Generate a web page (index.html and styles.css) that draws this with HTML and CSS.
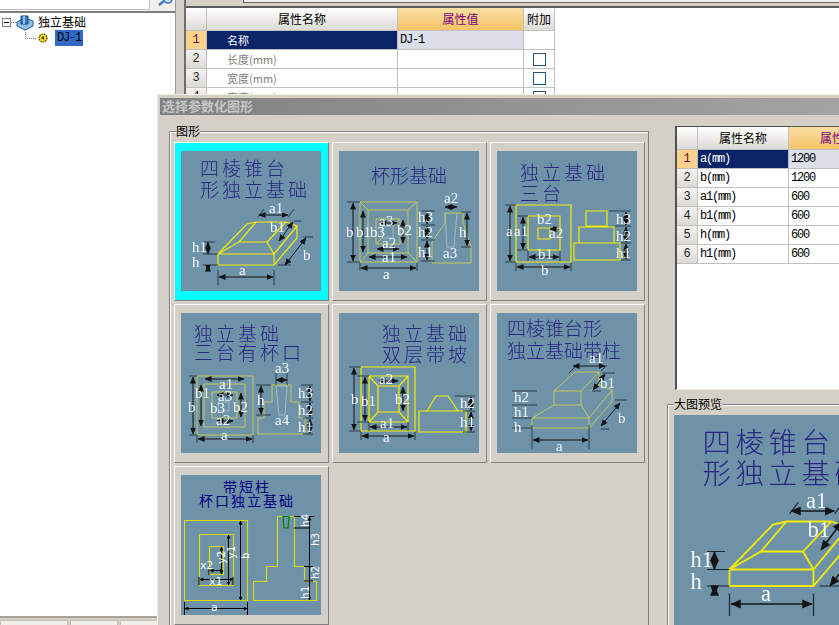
FILE: index.html
```html
<!DOCTYPE html>
<html lang="zh">
<head>
<meta charset="utf-8">
<title>选择参数化图形</title>
<link rel="stylesheet" href="styles.css">
</head>
<body>
<svg class="defs" aria-hidden="true">
  <defs>
    <marker id="ar" markerUnits="userSpaceOnUse" markerWidth="7" markerHeight="7" refX="6.500" refY="3.500" orient="auto-start-reverse"><path d="M0 .5L7 3.500L0 6.500z" fill="#141414"/></marker>
  </defs>
</svg>

<div class="page">
  <aside class="left">
    <div class="search">
      <div class="search-field"><span class="search-text">搜索构件...</span></div>
      <svg class="search-icon" width="16" height="6" viewBox="0 0 16 6"><path d="M2 5L7 1" stroke="#3d78c8" stroke-width="2.4" fill="none"/><circle cx="11" cy="-1" r="4" fill="#cfe2f6" stroke="#3d78c8" stroke-width="1.6"/></svg>
    </div>
    <div class="tree">
      <div class="tree-row">
        <svg class="tree-lead" width="36" height="17" viewBox="0 0 36 17">
          <rect x="2.5" y="4.5" width="8" height="8" fill="#fff" stroke="#808080"/>
          <path d="M4 8.5H9" stroke="#000"/>
          <path d="M11 8.5H17" stroke="#808080" stroke-dasharray="1 1"/>
          <path d="M17 8L25 4L33 7V12L25 16L17 12z" fill="#8ec0e8" stroke="#1c5c9c"/>
          <path d="M21 2H28V10H21z" fill="#3f7fc0" stroke="#123f78"/>
          <path d="M24 2V10" stroke="#bcdcf5" stroke-width="1.4"/>
        </svg>
        <span class="tree-label">独立基础</span>
      </div>
      <div class="tree-row tree-row-child">
        <svg class="tree-lead2" width="53" height="16" viewBox="0 0 53 16">
          <path d="M25.5 0V8.5H37" stroke="#808080" stroke-dasharray="1 1" fill="none"/>
          <circle cx="43" cy="8" r="4" fill="#f7e000" stroke="#403800" stroke-width="1.2" stroke-dasharray="1.6 .8"/>
          <circle cx="43" cy="8" r="1.4" fill="#403800"/>
        </svg>
        <span class="tree-selected">DJ-1</span>
      </div>
    </div>
    <div class="tabs">
      <span class="tab tab-a"></span><span class="tab tab-b"></span><span class="tab tab-c"></span>
    </div>
  </aside>

  <main class="right">
    <div class="strip"><span class="strip-field"></span></div>
    <table class="grid main-grid">
      <colgroup><col class="c-num"><col class="c-name"><col class="c-val"><col class="c-add"></colgroup>
      <tr class="head"><th></th><th>属性名称</th><th class="hot">属性值</th><th>附加</th></tr>
      <tr><td class="num on">1</td><td class="name sel">名称</td><td class="val cur">DJ-1</td><td></td></tr>
      <tr><td class="num">2</td><td class="name dim-text">长度(mm)</td><td></td><td class="chk"><span class="box"></span></td></tr>
      <tr><td class="num">3</td><td class="name dim-text">宽度(mm)</td><td></td><td class="chk"><span class="box"></span></td></tr>
      <tr><td class="num">4</td><td class="name dim-text">高度(mm)</td><td></td><td class="chk"><span class="box"></span></td></tr>
    </table>
  </main>
</div>

<section class="dialog">
  <h1 class="dialog-title">选择参数化图形</h1>
  <div class="dialog-body">
    <fieldset class="shapes">
      <legend>图形</legend>
      <div class="tiles">

        <div class="tile tile-on">
          <svg class="pic soft" viewBox="0 0 140 140">
            <text class="tt" x="19" y="25" letter-spacing="3">四棱锥台</text>
            <text class="tt" x="19" y="46" letter-spacing="3">形独立基础</text>
            <g class="y"><path d="M37 103H93V114H37zM37 103L66 73L75 71H105L116 75V87L93 114M93 103L116 75M37 103L58 91H86L93 103M58 91L75 71M86 91L105 71"/></g>
            <g class="tick"><path d="M37 119V134M93 119V134M22 91H34M22 103H37M22 114H37M113 70H120M110 114H97M122 86H132M77 66L83 58M107 66L113 58"/></g>
            <g class="dimg" marker-start="url(#ar)" marker-end="url(#ar)"><path d="M38 126H92"/><path d="M78 64H107"/><path d="M27 91V103"/><path d="M27 114V120"/><path d="M98 90L112 71"/><path d="M104 114L125 87"/></g>
            <g class="lb"><text x="88" y="62">a1</text><text x="89" y="81">b1</text><text x="122" y="109">b</text><text x="11" y="101">h1</text><text x="11" y="116">h</text><text x="58" y="124">a</text></g>
          </svg>
        </div>

        <div class="tile">
          <svg class="pic soft" viewBox="0 0 140 140">
            <text class="tt" x="32" y="32" font-size="18">杯形基础</text>
            <g class="p"><path d="M21 51H78V111H21zM29 59H69V102H29zM37 68H61V93H37zM21 51L29 59M78 51L69 59M21 111L29 102M78 111L69 102M37 93L43 87M61 68L54 75"/></g>
            <g class="w"><path d="M43 75H54V87H43zM106 62L108 96H115L118 62"/></g>
            <g class="p"><path d="M106 62H124V72L132 95V112H93V91L106 72z"/></g>
            <g class="tick"><path d="M82 60H96M82 74H96M82 89H96M82 110H96M122 61H132M122 96H132M21 112V120M78 112V120M8 51H21M8 111H21"/></g>
            <g class="dimg" marker-start="url(#ar)" marker-end="url(#ar)"><path d="M14 52V110"/><path d="M24 60V101"/><path d="M22 117H77"/><path d="M30 106H68"/><path d="M38 98H60"/><path d="M41 72H58"/><path d="M64 69V92"/><path d="M106 56H118"/><path d="M88 61V73"/><path d="M88 75V88"/><path d="M88 90V109"/><path d="M128 62V95"/></g>
            <g class="lb"><text x="7" y="86">b</text><text x="17" y="86">b1</text><text x="31" y="86">b3</text><text x="40" y="75">a3</text><text x="58" y="84">b2</text><text x="43" y="97">a2</text><text x="43" y="111">a1</text><text x="44" y="128">a</text><text x="105" y="52">a2</text><text x="79" y="71">h3</text><text x="79" y="86">h2</text><text x="79" y="106">h1</text><text x="120" y="86">h</text><text x="104" y="107">a3</text></g>
          </svg>
        </div>

        <div class="tile">
          <svg class="pic soft" viewBox="0 0 140 140">
            <text class="tt" x="23" y="29" letter-spacing="3">独立基础</text>
            <text class="tt" x="23" y="50" letter-spacing="3">三台</text>
            <g class="y"><path d="M19 54H74V111H19zM31 65H63V99H31zM41 77H53V88H41zM89 60H110V75H89zM82 76H117V92H82zM77 92H123V109H77z"/></g>
            <g class="tick"><path d="M112 60H134M118 75H134M124 92H134M124 109H134M8 54H19M8 111H19M20 65H31M20 99H31M19 112V120M74 112V120M31 100V110M63 100V110"/></g>
            <g class="dimg" marker-start="url(#ar)" marker-end="url(#ar)"><path d="M13 55V110"/><path d="M26 66V98"/><path d="M20 116H73"/><path d="M32 106H62"/><path d="M129 61V74"/><path d="M129 76V91"/><path d="M129 93V108"/><path d="M53 78H62"/></g>
            <g class="lb"><text x="9" y="85">a</text><text x="17" y="85">a1</text><text x="40" y="73">b2</text><text x="52" y="87">a2</text><text x="41" y="108">b1</text><text x="44" y="124">b</text><text x="119" y="73">h3</text><text x="119" y="90">h2</text><text x="119" y="107">h1</text></g>
          </svg>
        </div>

        <div class="tile">
          <svg class="pic soft" viewBox="0 0 140 140">
            <text class="tt" x="13" y="28" letter-spacing="3">独立基础</text>
            <text class="tt" x="13" y="47" letter-spacing="3">三台有杯口</text>
            <g class="p"><path d="M16 63H72V122H16zM23 71H64V114H23zM31 79H56V105H31zM91 72H110V89H118V105H124V121H77V105H83V89H91z"/></g>
            <g class="w"><path d="M37 89H48V98H37zM95 73H106L104 102H98z"/></g>
            <g class="tick"><path d="M8 63H16M8 122H16M16 122V130M72 122V130M75 72H90M75 102H90M120 72H132M120 89H132M122 105H132M122 121H132M95 60V72M106 60V72"/></g>
            <g class="dimg" marker-start="url(#ar)" marker-end="url(#ar)"><path d="M12 64V121"/><path d="M20 72V113"/><path d="M17 126H71"/><path d="M24 66H63"/><path d="M60 80V104"/><path d="M95 67H106"/><path d="M80 73V101"/><path d="M36 82H52"/><path d="M36 108H52"/><path d="M129 73V88"/><path d="M129 90V104"/><path d="M129 106V120"/></g>
            <g class="lb"><text x="7" y="99">b</text><text x="14" y="85">b1</text><text x="38" y="76">a1</text><text x="37" y="88">a3</text><text x="29" y="100">b3</text><text x="52" y="99">b2</text><text x="35" y="112">a2</text><text x="40" y="127">a</text><text x="94" y="60">a3</text><text x="76" y="92">h</text><text x="117" y="85">h3</text><text x="117" y="102">h2</text><text x="117" y="119">h1</text><text x="94" y="112">a4</text></g>
          </svg>
        </div>

        <div class="tile">
          <svg class="pic soft" viewBox="0 0 140 140">
            <text class="tt" x="43" y="28" letter-spacing="3">独立基础</text>
            <text class="tt" x="43" y="49" letter-spacing="3">双层带坡</text>
            <g class="y"><path d="M22 54H76V118H22zM30 63H69V109H30zM39 73H60V99H39zM30 63L39 73M69 63L60 73M30 109L39 99M69 109L60 99M80 98H127V119H80zM88 98L97 83H109L119 98"/></g>
            <g class="tick"><path d="M10 54H22M10 118H22M18 63H30M18 109H30M22 119V127M76 119V127M116 83H136M124 98H136M124 119H136M30 109V118M69 109V118"/></g>
            <g class="dimg" marker-start="url(#ar)" marker-end="url(#ar)"><path d="M15 55V117"/><path d="M26 64V108"/><path d="M23 123H75"/><path d="M31 114H68"/><path d="M40 68H59"/><path d="M64 74V98"/><path d="M132 84V97"/><path d="M132 99V118"/></g>
            <g class="lb"><text x="12" y="91">b</text><text x="22" y="93">b1</text><text x="40" y="71">a2</text><text x="56" y="91">b2</text><text x="41" y="115">a1</text><text x="44" y="129">a</text><text x="121" y="95">h2</text><text x="121" y="114">h1</text></g>
          </svg>
        </div>

        <div class="tile">
          <svg class="pic soft" viewBox="0 0 140 140">
            <text class="tt" x="10" y="23" font-size="18">四棱锥台形</text>
            <text class="tt" x="10" y="45" font-size="18">独立基础带柱</text>
            <g class="p"><path d="M35 105H92V115H35zM57 78H84V92H57zM57 78L78 59H102L84 78M102 59V72L93 78M35 105L57 92M92 105L84 92M92 115L115 89V77L102 72M92 105L115 77"/></g>
            <g class="tick"><path d="M35 112V136M92 112V136M15 78H40M15 92H40M15 105H35M15 115H35M78 54L72 60M110 52L104 58M104 78H95M105 60H118M104 116H112M118 87H130"/></g>
            <g class="dimg" marker-start="url(#ar)" marker-end="url(#ar)"><path d="M36 127H91"/><path d="M76 53H108"/><path d="M96 77L108 61"/><path d="M104 113L123 90"/></g>
            <g class="lb"><text x="17" y="89">h2</text><text x="17" y="104">h1</text><text x="17" y="119">h</text><text x="92" y="50">a1</text><text x="103" y="75">b1</text><text x="121" y="110">b</text><text x="59" y="138">a</text></g>
          </svg>
        </div>

        <div class="tile">
          <svg class="pic" viewBox="0 0 140 140">
            <text class="tt crisp" x="42" y="17" letter-spacing="2">带短柱</text>
            <text class="tt crisp" x="18" y="31" letter-spacing="2">杯口独立基础</text>
            <g class="y2"><path d="M3.500 45.500H66.500V125.500H3.500zM18.500 59.500H52.500V110.500H18.500zM28.500 71.500H42.500V99.500H28.500zM96.500 41.500H113.500V91.500H123.500V106.500H135.500V125.500H72.500V106.500H85.500V91.500H96.500z"/></g>
            <path d="M102 41.500H108L107 53H103z" fill="none" stroke="#008000" stroke-width="1.200"/>
            <g class="tick2"><path d="M3.500 127V141M66.500 127V141M113 41.500H133M113 53H128M123 91.500H132M123 106H132M18 102V110M52 102V110M28 92V100"/></g>
            <g class="dimg2" marker-start="url(#ar2)" marker-end="url(#ar2)"><path d="M4 133.500H66"/><path d="M59.500 46V125"/><path d="M47.500 60V110"/><path d="M40.500 72V99"/><path d="M19 104.500H52"/><path d="M29 95.500H42"/><path d="M128.500 42V125"/></g>
            <g class="lb2"><text x="19" y="94">x2</text><text x="28" y="110">x1</text><text x="30" y="136">a</text>
              <text transform="translate(44 89) rotate(-90)">y2</text><text transform="translate(54 84) rotate(-90)">y1</text><text transform="translate(68 84) rotate(-90)">b</text>
              <text transform="translate(128 52) rotate(-90)">h4</text><text transform="translate(138 71) rotate(-90)">h3</text><text transform="translate(138 104) rotate(-90)">h2</text><text transform="translate(128 124) rotate(-90)">h1</text></g>
          </svg>
        </div>

      </div>
    </fieldset>

    <div class="side">
      <div class="params">
        <table class="grid side-grid">
          <colgroup><col class="s-num"><col class="s-name"><col class="s-val"><col class="s-add"></colgroup>
          <tr class="head"><th></th><th>属性名称</th><th class="hot">属性值</th><th>附加</th></tr>
          <tr><td class="num on">1</td><td class="mono sel">a(mm)</td><td class="mono cur">1200</td><td></td></tr>
          <tr><td class="num">2</td><td class="mono">b(mm)</td><td class="mono">1200</td><td></td></tr>
          <tr><td class="num">3</td><td class="mono">a1(mm)</td><td class="mono">600</td><td></td></tr>
          <tr><td class="num">4</td><td class="mono">b1(mm)</td><td class="mono">600</td><td></td></tr>
          <tr><td class="num">5</td><td class="mono">h(mm)</td><td class="mono">600</td><td></td></tr>
          <tr><td class="num">6</td><td class="mono">h1(mm)</td><td class="mono">600</td><td></td></tr>
        </table>
      </div>
      <fieldset class="preview">
        <legend>大图预览</legend>
        <svg class="pic-big soft" viewBox="0 0 140 140">
          <text class="tt" x="19" y="25" letter-spacing="3">四棱锥台</text>
          <text class="tt" x="19" y="46" letter-spacing="3">形独立基础</text>
          <g class="y"><path d="M37 103H93V114H37zM37 103L66 73L75 71H105L116 75V87L93 114M93 103L116 75M37 103L58 91H86L93 103M58 91L75 71M86 91L105 71"/></g>
          <g class="tick"><path d="M37 119V134M93 119V134M22 91H34M22 103H37M22 114H37M113 70H120M110 114H97M122 86H132M77 66L83 58M107 66L113 58"/></g>
          <g class="dimg" marker-start="url(#ar)" marker-end="url(#ar)"><path d="M38 126H92"/><path d="M78 64H107"/><path d="M27 91V103"/><path d="M27 114V120"/><path d="M98 90L112 71"/><path d="M104 114L125 87"/></g>
          <g class="lb"><text x="88" y="62">a1</text><text x="89" y="81">b1</text><text x="122" y="109">b</text><text x="11" y="101">h1</text><text x="11" y="116">h</text><text x="58" y="124">a</text></g>
        </svg>
      </fieldset>
    </div>
  </div>
</section>
<svg class="defs" aria-hidden="true">
  <defs>
    <marker id="ar2" markerUnits="userSpaceOnUse" markerWidth="4" markerHeight="4" refX="3.500" refY="2" orient="auto-start-reverse"><path d="M0 0L4 2L0 4z" fill="#000"/></marker>
  </defs>
</svg>
</body>
</html>
```

FILE: styles.css
```css
* { box-sizing: border-box; }
html, body { margin: 0; padding: 0; }
body {
  width: 839px;
  height: 625px;
  overflow: hidden;
  position: relative;
  background: #d4d0c8;
  color: #000;
  font: 12px "Noto Sans CJK SC", "Liberation Sans", sans-serif;
}
.defs { position: absolute; width: 0; height: 0; }

.page { display: flex; height: 625px; }

/* left tree panel */
.left {
  width: 176px;
  flex: none;
  display: flex;
  flex-direction: column;
  background: #fff;
  border-right: 1px solid #9a9a9a;
}
.search {
  height: 13px;
  flex: none;
  display: flex;
  background: #f2f0ec;
  border-bottom: 2px solid #7c7c7c;
  overflow: hidden;
}
.search-field {
  width: 150px;
  height: 10px;
  background: #fff;
  border-right: 1px solid #c4c4c4;
  border-bottom: 1px solid #c4c4c4;
  overflow: hidden;
}
.search-text { display: block; margin-top: -14px; line-height: 16px; color: #444; white-space: nowrap; }
.search-icon { margin-left: 7px; overflow: visible; }
.tree { flex: 1; display: flex; flex-direction: column; padding-top: 1px; }
.tree-row { display: flex; align-items: center; height: 16px; }
.tree-lead { flex: none; margin-right: 2px; }
.tree-label { font-size: 12px; line-height: 16px; }
.tree-lead2 { flex: none; margin-right: 2px; }
.tree-selected {
  background: #316ac5;
  font: 12px/16px "Liberation Mono", monospace;
  padding: 0 2px 0 2px;
  width: 28px;
  letter-spacing: -1.2px;
  white-space: nowrap;
}
.tabs {
  height: 9px;
  flex: none;
  display: flex;
  gap: 2px;
  background: #d4d0c8;
  border-top: 2px solid #a8a49c;
  padding-top: 2px;
}
.tab { background: #efede8; border: 1px solid #c4c0b8; border-bottom: 0; }
.tab-a { width: 68px; }
.tab-b { width: 48px; }
.tab-c { width: 38px; }

/* right panel */
.right {
  flex: 1;
  margin-left: 8px;
  background: #fff;
  border-left: 2px solid #6e6e6e;
}
.strip {
  height: 8px;
  background: #d4d0c8;
  border-bottom: 2px solid #5a5a5a;
  padding-left: 57px;
}
.strip-field {
  display: block;
  height: 3px;
  background: #f2f2f2;
  border-left: 1px solid #555;
  border-bottom: 1px solid #666;
}

/* property grids */
.grid {
  border-collapse: separate;
  border-spacing: 0;
  table-layout: fixed;
  font-size: 12px;
}
.main-grid { width: 369px; }
.c-num { width: 21px; }
.c-name { width: 191px; }
.c-val { width: 126px; }
.c-add { width: 31px; }
.s-num { width: 21px; }
.s-name { width: 91px; }
.s-val { width: 99px; }
.s-add { width: 31px; }
.side-grid { width: 242px; }
.grid th, .grid td {
  padding: 0;
  height: 19px;
  border-right: 1px solid #c0c0c0;
  border-bottom: 1px solid #c0c0c0;
  line-height: 16px;
  overflow: hidden;
  white-space: nowrap;
}
.grid .head th {
  height: 23px;
  font-weight: 400;
  background: linear-gradient(#ffffff, #dcdad4);
  text-align: center;
}
.grid .head th.hot {
  background: linear-gradient(#fbdfa6, #f3c364);
  color: #7a0080;
}
.grid td.num {
  background: linear-gradient(#f4f3f0, #dcdad4);
  text-align: center;
  font: 12px/16px "Liberation Mono", monospace;
  color: #222;
}
.grid td.num.on { background: #fdd28c; color: #7a0040; }
.grid td.name { padding-left: 20px; font-size: 11px; color: #000; }
.grid td.dim-text { color: #808080; background: #fff; }
.grid td.sel { background: #0a2468; color: #fff; }
.grid td.val { padding-left: 2px; font: 12px/16px "Liberation Mono", monospace; letter-spacing: -1.2px; }
.grid td.cur { background: #dcdfea; }
.grid td.mono { padding-left: 2px; font: 12px/16px "Liberation Mono", monospace; letter-spacing: -1.2px; }
.grid td.sel.mono { color: #fff; }
.grid td.chk { text-align: center; line-height: 0; }
.box { display: inline-block; width: 13px; height: 13px; background: #fff; border: 1px solid #1f5580; }

/* dialog window */
.dialog {
  position: absolute;
  left: 157px;
  top: 94px;
  width: 760px;
  height: 560px;
  padding: 3px 2px 0;
  background: #d4d0c8;
  border: 1px solid #f1eee8;
  border-right: 0;
  border-bottom: 0;
}
.dialog-title {
  margin: 0;
  height: 17px;
  padding-left: 2px;
  font-size: 13px;
  line-height: 16px;
  font-weight: 700;
  color: #c6c6c6;
  background: linear-gradient(90deg, #828282, #a6a6a6);
}
.dialog-body { display: flex; padding: 9px 0 0 9px; }

.shapes, .preview {
  margin: 0;
  min-width: 0;
  border: 1px solid #808080;
  box-shadow: inset 1px 1px 0 #fff;
}
legend { padding: 0; font-size: 12px; line-height: 14px; height: 14px; }
.shapes { flex: none; width: 480px; padding: 4px 2px 0 4px; }
.shapes legend { margin-left: 2px; background: #d4d0c8; }
.tiles {
  display: grid;
  grid-template-columns: repeat(3, 155px);
  grid-auto-rows: 159px;
  gap: 3px;
}
.tile {
  padding: 8px 0 0 6px;
  background: #d4d0c8;
  border: 1px solid;
  border-color: #fff #808080 #808080 #fff;
}
.tile-on { background: #00ffff; border-color: #fff #808080 #808080 #fff; }
.pic, .pic-big { display: block; background: #6e92a8; }
.pic { width: 140px; height: 140px; }
.pic-big { width: 210px; height: 210px; }
.soft { filter: blur(.3px); }

.tt {
  font-family: "Noto Sans CJK SC", sans-serif;
  font-size: 19px;
  font-weight: 300;
  fill: #2a2682;
}
.tt.crisp { font-size: 14px; fill: #000080; font-weight: 400; }
.y { fill: none; stroke: #f4ec00; stroke-width: 1.2; }
.y2 { fill: none; stroke: #dcdc00; stroke-width: 1.1; }
.p { fill: none; stroke: #cfcf50; stroke-width: .9; }
.w { fill: none; stroke: #b8d0d0; stroke-width: .7; }
.tick { fill: none; stroke: #1c2830; stroke-width: .8; }
.tick2 { fill: none; stroke: #000; stroke-width: 1; }
.dimg { fill: none; stroke: #141414; stroke-width: 1; }
.dimg2 { fill: none; stroke: #000; stroke-width: 1; }
.lb text { font-family: "Liberation Serif", serif; font-size: 15px; fill: #f6f8fa; }
.lb2 text { font-family: "DejaVu Sans Mono", monospace; font-size: 11px; fill: #fff; }

/* dialog right column */
.side { flex: none; width: 260px; margin-left: 18px; display: flex; flex-direction: column; gap: 7px; padding-top: 2px; }
.params {
  height: 264px;
  flex: none;
  margin-left: 8px;
  background: #fff;
  border-top: 1px solid #505050;
  border-left: 2px solid #505050;
  border-bottom: 1px solid #ece9e2;
}
.preview { padding: 4px 0 0 6px; height: 240px; }
.preview legend { background: #d4d0c8; margin-left: 0; }
```
